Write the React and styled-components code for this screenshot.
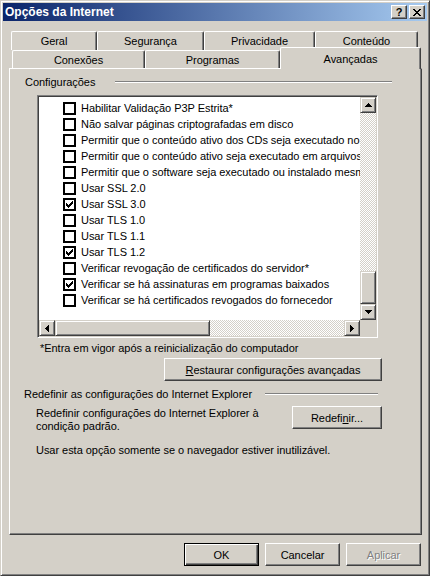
import { createGlobalStyle, styled } from 'styled-components';

// Janela clássica "Opções da Internet" (tema Windows clássico)

const GlobalStyle = createGlobalStyle`
  html, body {
    margin: 0;
    padding: 0;
    background: #d4d0c8;
  }
  body {
    font-family: "Liberation Sans", Arial, sans-serif;
    font-size: 11px;
    letter-spacing: -0.04px;
    color: #000;
  }
`;

const raised = `
  border: 1px solid;
  border-color: #fff #404040 #404040 #fff;
  box-shadow: inset -1px -1px #808080;
`;

const Window = styled.div`
  width: 430px;
  height: 576px;
  box-sizing: border-box;
  background: #d4d0c8;
  border: 1px solid;
  border-color: #d4d0c8 #404040 #404040 #d4d0c8;
  box-shadow: inset 1px 1px #fff, inset -1px -1px #808080;
  padding: 2px;
  display: flex;
  flex-direction: column;
`;

const TitleBar = styled.div`
  height: 18px;
  flex: 0 0 18px;
  display: flex;
  align-items: center;
  padding-left: 2px;
  background: linear-gradient(to right, #0a246a, #a6caf0);
`;

const Title = styled.span`
  color: #fff;
  font-weight: 700;
  font-size: 12px;
  letter-spacing: 0;
`;

const CaptionButtons = styled.div`
  margin-left: auto;
  display: flex;
  gap: 2px;
  padding-right: 2px;
`;

const CaptionButton = styled.div`
  width: 16px;
  height: 14px;
  box-sizing: border-box;
  background: #d4d0c8;
  border: 1px solid;
  border-color: #fff #404040 #404040 #fff;
  box-shadow: inset -1px -1px #808080;
  display: flex;
  align-items: center;
  justify-content: center;
  font-weight: 700;
  font-size: 11px;
  line-height: 11px;
  letter-spacing: 0;
`;

const Body = styled.div`
  display: flex;
  flex-direction: column;
  padding: 10px 5px 0 6px;
`;

const TabRow = styled.div`
  display: flex;
  align-items: flex-end;
  height: ${({ $height }) => $height}px;
  margin-left: ${({ $offset }) => $offset}px;
`;

const Tab = styled.div`
  width: ${({ $width }) => $width}px;
  height: ${({ $selected, $height }) => ($selected ? 22 : $height)}px;
  margin-bottom: ${({ $selected }) => ($selected ? -1 : 0)}px;
  box-sizing: border-box;
  background: #d4d0c8;
  border-top: 1px solid #fff;
  border-left: 1px solid #fff;
  border-right: 1px solid #404040;
  border-radius: 2px 2px 0 0;
  box-shadow: inset -1px 0 #808080;
  display: flex;
  align-items: center;
  justify-content: center;
  position: relative;
  z-index: ${({ $selected }) => ($selected ? 2 : 0)};
`;

const Panel = styled.div`
  height: 467px;
  box-sizing: border-box;
  border: 1px solid;
  border-color: #fff #404040 #404040 #fff;
  box-shadow: inset -1px -1px #808080;
  display: flex;
  flex-direction: column;
  padding-top: 6px;
`;

const GroupHeader = styled.div`
  display: flex;
  align-items: center;
  height: 14px;
  margin-left: ${({ $left }) => $left}px;
  margin-top: ${({ $top }) => $top}px;
`;

const GroupLabel = styled.span`
  flex: 0 0 ${({ $width }) => $width}px;
  white-space: nowrap;
`;

const EtchedLine = styled.div`
  width: ${({ $width }) => $width}px;
  height: 0;
  border-top: 1px solid #808080;
  border-bottom: 1px solid #fff;
`;

const ListBox = styled.div`
  margin: 6px 0 0 27px;
  width: 341px;
  height: 243px;
  box-sizing: border-box;
  border: 1px solid;
  border-color: #808080 #fff #fff #808080;
  box-shadow: inset 1px 1px #404040, inset -1px -1px #d4d0c8;
  padding: 1px;
  display: grid;
  grid-template-columns: 1fr 16px;
  grid-template-rows: 1fr 16px;
`;

const ListContent = styled.div`
  background: #fff;
  overflow: hidden;
  padding-top: 3px;
  white-space: nowrap;
`;

const Item = styled.div`
  height: 16px;
  display: flex;
  align-items: center;
  padding-left: 24px;
`;

const CheckBox = styled.div`
  flex: 0 0 13px;
  width: 13px;
  height: 13px;
  box-sizing: border-box;
  border: 2px solid #000;
  background: #fff;
  margin-right: 5px;
  display: flex;
  align-items: center;
  justify-content: center;
`;

const ScrollBar = styled.div`
  display: flex;
  flex-direction: ${({ $vertical }) => ($vertical ? 'column' : 'row')};
`;

const ScrollButton = styled.div`
  flex: 0 0 16px;
  width: 16px;
  height: 16px;
  box-sizing: border-box;
  background: #d4d0c8;
  border: 1px solid;
  border-color: #d4d0c8 #404040 #404040 #d4d0c8;
  box-shadow: inset 1px 1px #fff, inset -1px -1px #808080;
  display: flex;
  align-items: center;
  justify-content: center;
`;

const Thumb = styled.div`
  flex: 0 0 ${({ $size }) => $size}px;
  box-sizing: border-box;
  background: #d4d0c8;
  border: 1px solid;
  border-color: #d4d0c8 #404040 #404040 #d4d0c8;
  box-shadow: inset 1px 1px #fff, inset -1px -1px #808080;
`;

const Track = styled.div`
  flex: 1;
  background: repeating-conic-gradient(#fff 0 25%, #d4d0c8 0 50%) 0 0 / 2px 2px;
`;

const Corner = styled.div`
  background: #d4d0c8;
`;

const Note = styled.div`
  margin: 3px 0 0 30px;
  line-height: 14px;
`;

const Button = styled.div`
  width: ${({ $width }) => $width}px;
  height: 23px;
  box-sizing: border-box;
  background: #d4d0c8;
  ${({ $default }) =>
    $default
      ? `
    border: 1px solid #000;
    box-shadow: inset 1px 1px #fff, inset -1px -1px #404040, inset -2px -2px #808080;
  `
      : raised}
  margin-left: ${({ $left }) => $left || 0}px;
  margin-top: ${({ $top }) => $top || 0}px;
  display: flex;
  align-items: center;
  justify-content: center;
  color: ${({ $disabled }) => ($disabled ? '#808080' : '#000')};
  text-shadow: ${({ $disabled }) => ($disabled ? '1px 1px #fff' : 'none')};
  white-space: nowrap;
`;

const Mnemonic = styled.span`
  text-decoration: underline;
`;

const ResetRow = styled.div`
  display: flex;
  align-items: flex-start;
  margin: 5px 0 0 26px;
`;

const ResetText = styled.div`
  width: 256px;
  line-height: 13px;
  padding-top: 1px;
`;

const Hint = styled.div`
  margin: 10px 0 0 26px;
  line-height: 14px;
`;

const DialogButtons = styled.div`
  display: flex;
  justify-content: flex-end;
  gap: 6px;
  margin-top: 8px;
  padding-right: 1px;
`;

function PixelGlyph({ width, height, rects, color = '#000' }) {
  return (
    <svg width={width} height={height} viewBox={`0 0 ${width} ${height}`} shapeRendering="crispEdges">
      {rects.map(([x, y, w, h = 1], i) => (
        <rect key={i} x={x} y={y} width={w} height={h} fill={color} />
      ))}
    </svg>
  );
}

const closeGlyph = [
  [0, 0, 2], [6, 0, 2],
  [1, 1, 2], [5, 1, 2],
  [2, 2, 4],
  [3, 3, 2],
  [2, 4, 4],
  [1, 5, 2], [5, 5, 2],
  [0, 6, 2], [6, 6, 2],
];

const checkGlyph = [
  [6, 0, 1], [5, 1, 2], [0, 2, 1], [4, 2, 3], [0, 3, 2], [3, 3, 3], [0, 4, 5], [1, 5, 3], [2, 6, 1],
];

const upArrow = [[3, 0, 1], [2, 1, 3], [1, 2, 5], [0, 3, 7]];
const downArrow = [[0, 0, 7], [1, 1, 5], [2, 2, 3], [3, 3, 1]];
const leftArrow = [[3, 0, 1], [2, 1, 2], [1, 2, 3], [0, 3, 4], [1, 4, 3], [2, 5, 2], [3, 6, 1]];
const rightArrow = [[0, 0, 1], [0, 1, 2], [0, 2, 3], [0, 3, 4], [0, 4, 3], [0, 5, 2], [0, 6, 1]];

const topTabs = [
  { label: 'Geral', width: 86 },
  { label: 'Segurança', width: 107 },
  { label: 'Privacidade', width: 111 },
  { label: 'Conteúdo', width: 103 },
];

const bottomTabs = [
  { label: 'Conexões', width: 133 },
  { label: 'Programas', width: 135 },
  { label: 'Avançadas', width: 141, selected: true },
];

const settings = [
  { label: 'Habilitar Validação P3P Estrita*' },
  { label: 'Não salvar páginas criptografadas em disco' },
  { label: 'Permitir que o conteúdo ativo dos CDs seja executado no Meu Computador*' },
  { label: 'Permitir que o conteúdo ativo seja executado em arquivos do Meu Computador*' },
  { label: 'Permitir que o software seja executado ou instalado mesmo que a assinatura seja inválida' },
  { label: 'Usar SSL 2.0' },
  { label: 'Usar SSL 3.0', checked: true },
  { label: 'Usar TLS 1.0' },
  { label: 'Usar TLS 1.1' },
  { label: 'Usar TLS 1.2', checked: true },
  { label: 'Verificar revogação de certificados do servidor*' },
  { label: 'Verificar se há assinaturas em programas baixados', checked: true },
  { label: 'Verificar se há certificados revogados do fornecedor' },
];

export default function App() {
  return (
    <>
      <GlobalStyle />
      <Window>
        <TitleBar>
          <Title>Opções da Internet</Title>
          <CaptionButtons>
            <CaptionButton>?</CaptionButton>
            <CaptionButton>
              <PixelGlyph width={8} height={7} rects={closeGlyph} />
            </CaptionButton>
          </CaptionButtons>
        </TitleBar>

        <Body>
          <TabRow $height={19} $offset={2}>
            {topTabs.map((tab) => (
              <Tab key={tab.label} $width={tab.width} $height={19}>
                {tab.label}
              </Tab>
            ))}
          </TabRow>
          <TabRow $height={18} $offset={3}>
            {bottomTabs.map((tab) => (
              <Tab key={tab.label} $width={tab.width} $height={18} $selected={tab.selected}>
                {tab.label}
              </Tab>
            ))}
          </TabRow>

          <Panel>
            <GroupHeader $left={15} $top={0}>
              <GroupLabel $width={90}>Configurações</GroupLabel>
              <EtchedLine $width={277} />
            </GroupHeader>

            <ListBox>
              <ListContent>
                {settings.map((s) => (
                  <Item key={s.label}>
                    <CheckBox>
                      {s.checked && <PixelGlyph width={7} height={7} rects={checkGlyph} />}
                    </CheckBox>
                    {s.label}
                  </Item>
                ))}
              </ListContent>
              <ScrollBar $vertical>
                <ScrollButton>
                  <PixelGlyph width={7} height={4} rects={upArrow} />
                </ScrollButton>
                <Track />
                <Thumb $size={33} />
                <ScrollButton>
                  <PixelGlyph width={7} height={4} rects={downArrow} />
                </ScrollButton>
              </ScrollBar>
              <ScrollBar>
                <ScrollButton>
                  <PixelGlyph width={4} height={7} rects={leftArrow} />
                </ScrollButton>
                <Thumb $size={155} />
                <Track />
                <ScrollButton>
                  <PixelGlyph width={4} height={7} rects={rightArrow} />
                </ScrollButton>
              </ScrollBar>
              <Corner />
            </ListBox>

            <Note>*Entra em vigor após a reinicialização do computador</Note>

            <Button $width={218} $left={154} $top={3}>
              <span>
                <Mnemonic>R</Mnemonic>estaurar configurações avançadas
              </span>
            </Button>

            <GroupHeader $left={14} $top={6}>
              <GroupLabel $width={241}>Redefinir as configurações do Internet Explorer</GroupLabel>
              <EtchedLine $width={113} />
            </GroupHeader>

            <ResetRow>
              <ResetText>
                Redefinir configurações do Internet Explorer à
                <br />
                condição padrão.
              </ResetText>
              <Button $width={90}>
                <span>
                  Redefi<Mnemonic>n</Mnemonic>ir...
                </span>
              </Button>
            </ResetRow>

            <Hint>Usar esta opção somente se o navegador estiver inutilizável.</Hint>
          </Panel>

          <DialogButtons>
            <Button $width={75} $default>OK</Button>
            <Button $width={75}>Cancelar</Button>
            <Button $width={75} $disabled>Aplicar</Button>
          </DialogButtons>
        </Body>
      </Window>
    </>
  );
}
